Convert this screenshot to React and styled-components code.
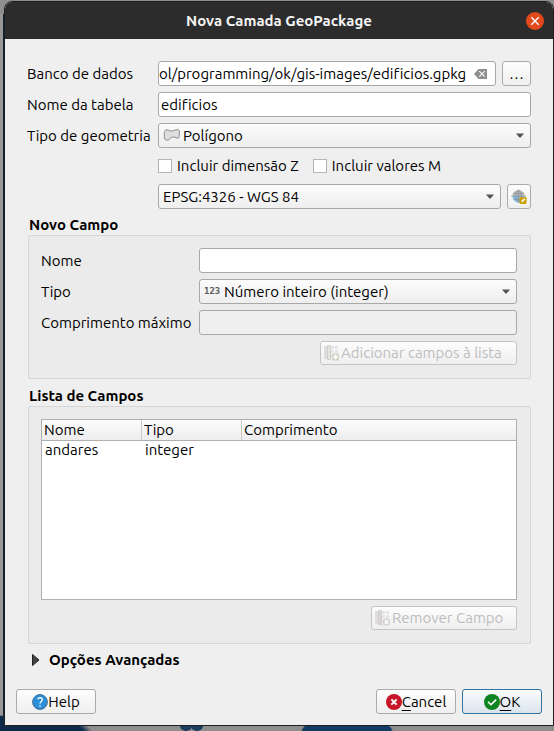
import React, { useLayoutEffect, useRef } from "react";
import styled, { createGlobalStyle, css } from "styled-components";

const Global = createGlobalStyle`
  *, *::before, *::after { box-sizing: border-box; }
  body { margin: 0; }
  body, button, input, select {
    font: 15px/20px "Ubuntu", "Noto Sans", sans-serif;
    font-variant-ligatures: none;
    color: #000;
  }
`;

const Desktop = styled.div`
  min-height: 100vh;
  display: flex;
  padding: 1px 0 5px 4px;
  background:
    radial-gradient(46px 14px at 347px 100%, #123c63 0 96%, transparent),
    radial-gradient(6px 4px at 186px 727px, #1d3f5e 0 90%, transparent),
    radial-gradient(6px 4px at 197px 727px, #1d3f5e 0 90%, transparent),
    radial-gradient(92px 16px at 0 100%, #0d2a48 0 90%, transparent),
    linear-gradient(#8e8e8e 0 14px, transparent 14px),
    linear-gradient(90deg, #989898 0 3px, #12202e 3px 5px, transparent 5px),
    #8e8e8e;
`;

const Dialog = styled.main`
  flex: 1;
  min-width: 0;
  display: flex;
  flex-direction: column;
  border: 1px solid #1f1f1f;
  border-radius: 8px 8px 0 0;
  background: #efefef;
`;

const TitleBar = styled.header`
  height: 37px;
  display: grid;
  grid-template-columns: 18px 1fr 18px;
  align-items: center;
  padding: 0 9px;
  border-radius: 7px 7px 0 0;
  background: #2c2c2c;
  h1 { margin: 0; color: #f4f4f4; font-size: 15px; line-height: 20px; font-weight: 700; text-align: center; }
`;

const CloseButton = styled.button`
  grid-column: 3;
  width: 18px;
  height: 18px;
  display: flex;
  padding: 0;
  border: 0;
  border-radius: 50%;
  background: #e2491b;
`;

const Content = styled.form`
  flex: 1;
  display: flex;
  flex-direction: column;
  padding: 22px 22px 0;
`;

const FormGrid = styled.div`
  display: grid;
  grid-template-columns: ${(p) => p.$label}px minmax(0, 1fr);
  gap: 6px;
  align-items: center;
  label { white-space: nowrap; }
`;

const Line = styled.div`
  grid-column: 2;
  display: flex;
  align-items: center;
  gap: 6px;
`;

const Checks = styled(Line)`
  height: 24px;
  gap: 14px;
`;

const Check = styled.label`
  display: flex;
  align-items: center;
  gap: 5px;
  input {
    appearance: none;
    width: 14px;
    height: 14px;
    margin: 0;
    border: 1px solid #b6b6b6;
    background: #fff;
  }
`;

const field = css`
  width: 100%;
  min-width: 0;
  height: 25px;
  border: 1px solid #a8a8a8;
  border-radius: 3px;
`;

const TextInput = styled.input`
  ${field}
  padding: 0 2px;
  background: #fff;
  &:disabled { background: #efefef; }
`;

const PathBox = styled.div`
  ${field}
  flex: 1;
  display: flex;
  align-items: center;
  padding-right: 7px;
  gap: 8px;
  background: #fff;
`;

const PathInput = styled.input`
  flex: 1;
  min-width: 0;
  height: 23px;
  padding: 0;
  border: 0;
  background: none;
`;

const ClearButton = styled.button`
  display: flex;
  padding: 0;
  border: 0;
  background: none;
`;

const SelectBox = styled.div`
  display: grid;
  flex: 1;
  min-width: 0;
  align-items: center;
  > * { grid-area: 1 / 1; }
  > svg { margin-left: 5px; pointer-events: none; z-index: 1; }
  > svg:last-child { margin: 0 7px 0 0; justify-self: end; }
`;

const NativeSelect = styled.select`
  ${field}
  appearance: none;
  padding: 0 20px 0 ${(p) => (p.$icon ? 24 : 4)}px;
  background: linear-gradient(#fcfcfc, #eeeeee);
`;

const Button = styled.button`
  height: 25px;
  width: ${(p) => (p.$width ? `${p.$width}px` : "auto")};
  flex: none;
  display: flex;
  align-items: center;
  justify-content: center;
  padding: 0 3px;
  border: 1px solid ${(p) => (p.$primary ? "#2e74a0" : "#ababab")};
  border-radius: 3px;
  background: ${(p) => (p.$primary ? "linear-gradient(#fafbfc, #dbe4ec)" : "linear-gradient(#fdfdfd, #efefef)")};
  &:disabled { height: 24px; justify-content: flex-start; gap: 1px; color: #bdbdbd; border-color: #c4c4c4; }
  u { text-underline-offset: 3px; }
`;

const Group = styled.section`
  display: flex;
  flex-direction: column;
  flex: ${(p) => (p.$grow ? 1 : "none")};
  margin: ${(p) => (p.$grow ? 7 : 6)}px 0 0 1px;
`;

const GroupTitle = styled.h2`
  margin: 0 1px;
  font-size: 15px;
  line-height: 20px;
  font-weight: 700;
`;

const GroupBox = styled.div`
  flex: 1;
  display: flex;
  flex-direction: column;
  gap: 6px;
  padding: 12px 13px 13px 12px;
  border: 1px solid #d6d6d6;
  border-radius: 2px;
  background: #ebebeb;
`;

const Actions = styled.div`
  display: flex;
  justify-content: flex-end;
`;

const TableFrame = styled.div`
  flex: 1;
  border: 1px solid #b0b0b0;
  background: #fff;
`;

const Table = styled.table`
  width: 100%;
  border-collapse: separate;
  border-spacing: 0;
  table-layout: fixed;
  th, td { padding: 0 0 0 3px; font-weight: 400; text-align: left; line-height: 18px; }
  th { height: 21px; padding-left: 2px; border-bottom: 1px solid #b0b0b0; background: linear-gradient(#fcfcfc, #ededed); }
  th:nth-child(-n + 2) { width: 100px; border-right: 1px solid #cacaca; }
`;

const Advanced = styled.button`
  align-self: flex-start;
  display: flex;
  align-items: center;
  gap: 9px;
  margin: 6px 0 0 5px;
  padding: 0;
  border: 0;
  background: none;
  font-weight: 700;
`;

const Footer = styled.footer`
  display: flex;
  gap: 6px;
  padding: 19px 11px 11px;
  > :first-child { margin-right: auto; }
`;

const Arrow = () => (
  <svg width="8" height="5" viewBox="0 0 8 5"><path d="M0 .5h8L4.6 4.6H3.4z" fill="#555" /></svg>
);

const CloseIcon = () => (
  <svg width="18" height="18" viewBox="0 0 18 18"><path d="M5.3 5.3l7.4 7.4m0-7.4l-7.4 7.4" stroke="#fff" strokeWidth="1.4" /></svg>
);

const ClearIcon = () => (
  <svg width="14" height="10" viewBox="0 0 14 10">
    <path d="M4.5 0H13v10H4.5L0 5z" fill="#8e8e8e" />
    <path d="M5.3 2.2l5.4 5.4m0-5.4L5.3 7.6" stroke="#fff" strokeWidth="1.1" />
  </svg>
);

const PolygonIcon = () => (
  <svg width="18" height="16" viewBox="0 0 18 16">
    <path d="M3 2C4.500 1.200 5.500 2.800 8 3S12 1.500 14.500 1.600c1.800.1 2.200 1.700 1.800 3.400-.3 1.200.2 2.300-.1 3.700-.3 1.500-1.800 1.700-3.200 1-1.500-.8-3-1-4.300-.3C7 10.300 6.500 12 4.500 12.200 2 12.400 1.100 10.500 1.200 8.500c.1-1.200.3-1.800.1-3C1.200 4 1.600 2.700 3 2z" fill="#dedede" stroke="#8a8a8a" />
  </svg>
);

const NumberIcon = () => (
  <svg width="17" height="14" viewBox="0 0 17 14">
    <text x="0" y="9" fontSize="9" fontWeight="700" fill="#5a5a5a" fontFamily="DejaVu Sans Mono, monospace">123</text>
  </svg>
);

const GlobeIcon = () => (
  <svg width="17" height="16" viewBox="0 0 17 16">
    <path d="M1.500 7a6.500 6.500 0 0 1 13 0z" fill="#b9bcbf" />
    <path d="M1.500 7h13a6.500 7 0 0 1-13 0z" fill="#8dbde6" />
    <path d="M0 7h16M2.500 4h11M3 10.500h10M8 .5v13M8 .5C4 3.500 4 10.500 8 13.500M8 .5c4 3 4 10 0 13" fill="none" stroke="#85898c" strokeWidth=".7" />
    <rect x="9" y="8" width="7.500" height="7.500" rx="1.300" fill="#caa20c" />
    <path d="M11 13.700l.4-1.600 2.700-2.700 1.100 1.100-2.700 2.700z" fill="#fff" />
  </svg>
);

const FieldsIcon = ({ remove }) => (
  <svg width="16" height="16" viewBox="0 0 16 16">
    <path d="M0 1h4v13H0z" fill="#dedede" />
    <path d="M5 1h9v11H5z" fill="#e2e5e7" />
    <path d="M5 4.500h9M5 8.500h9M10.500 1v11" stroke="#fafafa" />
    <path d="M3.500.5h3v14h-3z" fill={remove ? "#ddd5d7" : "#e4e5da"} stroke="#cfcfcc" />
    <rect x="8" y="8.500" width="7" height="7" rx="1.500" fill={remove ? "#d8d2d3" : "#cfcfc3"} />
    {remove
      ? <path d="M9.800 10.300l3.400 3.400m0-3.400l-3.400 3.400" stroke="#fff" strokeWidth="1.400" />
      : <path d="M11.500 9.500v5M9.300 10.800l4.400 2.500m0-2.500l-4.400 2.500" stroke="#fff" strokeWidth="1.200" />}
  </svg>
);

const HelpIcon = () => (
  <svg width="16" height="16" viewBox="0 0 16 16">
    <circle cx="8" cy="8" r="7.400" fill="#2d8fd8" stroke="#3d6f96" />
    <path d="M5.700 5.400C6.200 3.200 10.200 3.100 10.300 5.600c.1 1.900-2.300 1.900-2.300 4M8 11.200v1.500" fill="none" stroke="#fff" strokeWidth="1.300" />
  </svg>
);

const CancelIcon = () => (
  <svg width="16" height="16" viewBox="0 0 16 16">
    <circle cx="8" cy="8" r="8" fill="#c7162b" />
    <path d="M5.400 5.400l5.200 5.200m0-5.200l-5.200 5.200" stroke="#fff" strokeWidth="2" />
  </svg>
);

const OkIcon = () => (
  <svg width="16" height="16" viewBox="0 0 16 16">
    <circle cx="8" cy="8" r="8" fill="#0e8420" />
    <path d="M4 7.700l3 3 5.200-5" fill="none" stroke="#fff" strokeWidth="1.600" />
  </svg>
);

const Select = ({ id, icon, label, children }) => (
  <SelectBox>
    {icon}
    <NativeSelect id={id} $icon={Boolean(icon)} aria-label={label}>{children}</NativeSelect>
    <Arrow />
  </SelectBox>
);

export default function App() {
  const path = useRef(null);
  useLayoutEffect(() => {
    const showEnd = () => {
      if (path.current) path.current.scrollLeft = path.current.scrollWidth;
    };
    showEnd();
    document.fonts.ready.then(showEnd);
  }, []);

  return (
    <Desktop>
      <Global />
      <Dialog>
        <TitleBar>
          <span />
          <h1>Nova Camada GeoPackage</h1>
          <CloseButton aria-label="Fechar"><CloseIcon /></CloseButton>
        </TitleBar>
        <Content id="layer-form" onSubmit={(e) => e.preventDefault()}>
          <FormGrid $label={125}>
            <label htmlFor="db">Banco de dados</label>
            <Line>
              <PathBox>
                <PathInput ref={path} id="db" defaultValue="ol/programming/ok/gis-images/edificios.gpkg" />
                <ClearButton type="button" aria-label="Limpar"><ClearIcon /></ClearButton>
              </PathBox>
              <Button type="button" $width={29}>…</Button>
            </Line>
            <label htmlFor="table">Nome da tabela</label>
            <TextInput id="table" defaultValue="edificios" />
            <label htmlFor="geom">Tipo de geometria</label>
            <Select id="geom" icon={<PolygonIcon />}><option>Polígono</option></Select>
            <Checks>
              <Check><input type="checkbox" />Incluir dimensão Z</Check>
              <Check><input type="checkbox" />Incluir valores M</Check>
            </Checks>
            <Line>
              <Select id="crs" label="SRC"><option>EPSG:4326 - WGS 84</option></Select>
              <Button type="button" $width={24} aria-label="Selecionar SRC"><GlobeIcon /></Button>
            </Line>
          </FormGrid>

          <Group>
            <GroupTitle>Novo Campo</GroupTitle>
            <GroupBox>
              <FormGrid $label={152}>
                <label htmlFor="name">Nome</label>
                <TextInput id="name" />
                <label htmlFor="type">Tipo</label>
                <Select id="type" icon={<NumberIcon />}><option>Número inteiro (integer)</option></Select>
                <label htmlFor="length">Comprimento máximo</label>
                <TextInput id="length" disabled />
              </FormGrid>
              <Actions>
                <Button type="button" disabled $width={197}><FieldsIcon />Adicionar campos à lista</Button>
              </Actions>
            </GroupBox>
          </Group>

          <Group $grow>
            <GroupTitle>Lista de Campos</GroupTitle>
            <GroupBox>
              <TableFrame>
                <Table>
                  <thead><tr><th>Nome</th><th>Tipo</th><th>Comprimento</th></tr></thead>
                  <tbody><tr><td>andares</td><td>integer</td><td /></tr></tbody>
                </Table>
              </TableFrame>
              <Actions>
                <Button type="button" disabled $width={146}><FieldsIcon remove />Remover Campo</Button>
              </Actions>
            </GroupBox>
          </Group>

          <Advanced type="button" aria-expanded="false">
            <svg width="8" height="12" viewBox="0 0 8 12"><path d="M.5.500L7 6 .5 11.500z" fill="#444" stroke="#222" /></svg>
            Opções Avançadas
          </Advanced>
        </Content>
        <Footer>
          <Button type="button" $width={80}><HelpIcon />Help</Button>
          <Button type="button" $width={80}><CancelIcon /><span><u>C</u>ancel</span></Button>
          <Button type="submit" form="layer-form" $width={80} $primary><OkIcon /><span><u>O</u>K</span></Button>
        </Footer>
      </Dialog>
    </Desktop>
  );
}
